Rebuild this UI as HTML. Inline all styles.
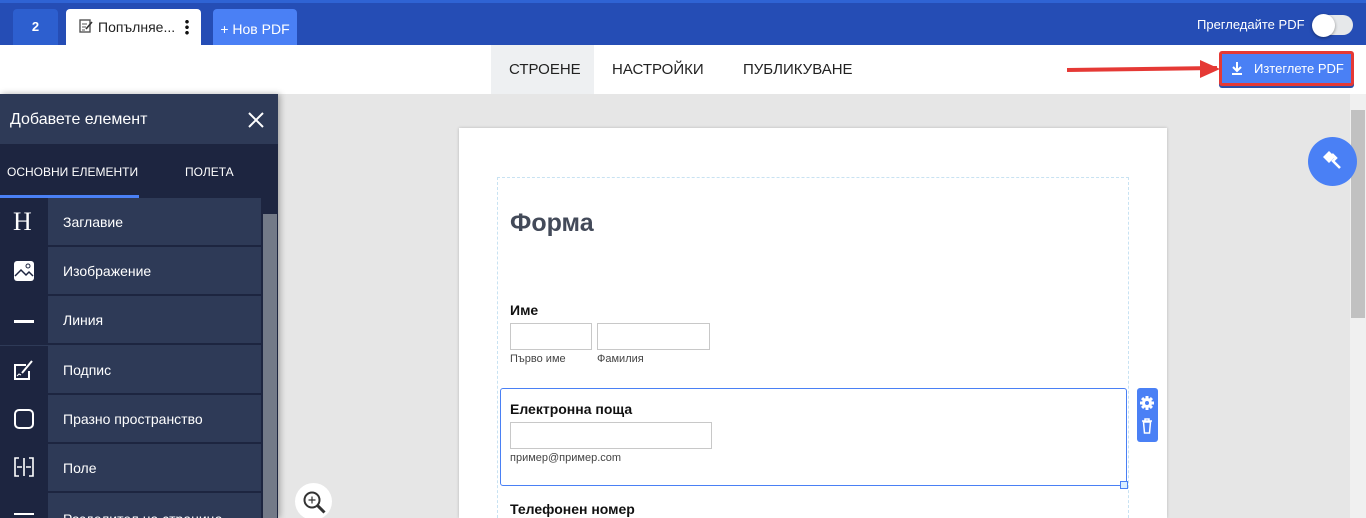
<!DOCTYPE html>
<html style="width:1366px;height:518px;overflow:hidden"><head><meta charset="utf-8"><style>
*{margin:0;padding:0;box-sizing:border-box}
body{width:1366px;height:518px;overflow:hidden;background:#e6e6e6;font-family:"Liberation Sans",sans-serif;position:relative}
.abs{position:absolute}
.top{left:0;top:0;width:1366px;height:45px;background:#254db5;border-top:3px solid #2f63d4}
.bar{left:0;top:45px;width:1366px;height:49px;background:#fff}
.side{left:0;top:94px;width:278px;height:424px;background:#2e3a57;box-shadow:2px 0 6px rgba(0,0,0,.3);overflow:hidden}
.row{position:absolute;left:0;width:261px;height:49px;border-bottom:2px solid #1d2540;color:#fff;font-size:14px}
.row .ic{position:absolute;left:0;top:0;width:48px;height:100%;background:#1d2540}
.row span{position:absolute;left:63px;top:16px}
.lbl{font-weight:bold;font-size:14px;color:#111}
.inp{position:absolute;border:1px solid #c8c8c8;background:#fff}
.sm{font-size:11px;color:#444;position:absolute}
</style></head><body>
<div class="abs top"></div>
<div class="abs" style="left:13px;top:9px;width:45px;height:36px;background:#2d5fcf;border-radius:4px 4px 0 0;color:#fff;font-size:13px;font-weight:bold;text-align:center;line-height:36px">2</div>
<div class="abs" style="left:66px;top:9px;width:135px;height:36px;background:#fff;border-radius:4px 4px 0 0;font-size:14px;color:#222;line-height:36px;padding-left:32px">Попълняе...</div>
<svg class="abs" style="left:79px;top:19px" width="14" height="15" viewBox="0 0 14 15"><rect x="1" y="1" width="10" height="12" fill="none" stroke="#555" stroke-width="1.4"/><path d="M3 5h5M3 8h4M3 11h3" stroke="#555"/><path d="M7 10l6-7" stroke="#333" stroke-width="1.6"/></svg>
<div class="abs" style="left:185px;top:19px;width:4px;height:16px;background:radial-gradient(circle,#111 1.6px,transparent 2px) 0 0/4px 5.5px"></div>
<div class="abs" style="left:213px;top:9px;width:84px;height:36px;background:#4a80f5;border-radius:4px 4px 0 0;color:#fff;font-size:14px;line-height:40px;text-align:center">+ Нов PDF</div>
<div class="abs" style="left:1197px;top:17px;color:#fff;font-size:13px">Прегледайте PDF</div>
<div class="abs" style="left:1313px;top:15px;width:40px;height:20px;border-radius:10px;background:#e6e8ea"></div>
<div class="abs" style="left:1312px;top:14px;width:23px;height:23px;border-radius:50%;background:#fff;box-shadow:0 1px 3px rgba(0,0,0,.4)"></div>
<div class="abs bar"></div>
<div class="abs" style="left:491px;top:45px;width:103px;height:49px;background:#eef0f2"></div>
<div class="abs" style="left:509px;top:61px;font-size:15px;color:#222">СТРОЕНЕ</div>
<div class="abs" style="left:612px;top:61px;font-size:15px;color:#222">НАСТРОЙКИ</div>
<div class="abs" style="left:743px;top:61px;font-size:15px;color:#222">ПУБЛИКУВАНЕ</div>
<div class="abs" style="left:1067px;top:67px;width:150px;height:4px;background:#e53935;transform:rotate(-0.8deg)"></div>
<div class="abs" style="left:1200px;top:60px;width:0;height:0;border-left:20px solid #e53935;border-top:9px solid transparent;border-bottom:9px solid transparent"></div>
<div class="abs" style="left:1219px;top:51px;width:135px;height:35px;border:3px solid #e53935;border-radius:3px;background:#4a80f5;color:#fff;font-size:13px;line-height:29px;padding-left:32px;box-shadow:0 2px 0 #2a4fa8">Изтеглете PDF</div>
<svg class="abs" style="left:1231px;top:61px" width="12" height="14"><path d="M6 1v8M2 6l4 4 4-4M1 13h10" stroke="#fff" stroke-width="2" fill="none"/></svg>
<div class="abs" style="left:1350px;top:94px;width:16px;height:424px;background:#f0f0f0"></div>
<div class="abs" style="left:1351px;top:110px;width:14px;height:208px;background:#c1c1c1"></div>
<div class="abs" style="left:459px;top:128px;width:708px;height:390px;background:#fff;box-shadow:0 0 3px rgba(0,0,0,.2)"></div>
<div class="abs" style="left:497px;top:177px;width:632px;height:341px;border:1px dashed #c8e2f2;border-bottom:none"></div>
<div class="abs" style="left:510px;top:209px;font-size:25px;font-weight:bold;color:#434a59">Форма</div>
<div class="abs lbl" style="left:510px;top:302px">Име</div>
<div class="inp" style="left:510px;top:323px;width:82px;height:27px"></div>
<div class="inp" style="left:597px;top:323px;width:113px;height:27px"></div>
<div class="sm" style="left:510px;top:353px">Първо име</div>
<div class="sm" style="left:597px;top:353px">Фамилия</div>
<div class="abs" style="left:500px;top:388px;width:627px;height:98px;border:1px solid #4a80f5;border-radius:3px"></div>
<div class="abs" style="left:1120px;top:481px;width:8px;height:8px;border:1px solid #4a80f5;background:#dbeeff"></div>
<div class="abs lbl" style="left:510px;top:401px">Електронна поща</div>
<div class="inp" style="left:510px;top:422px;width:202px;height:27px"></div>
<div class="sm" style="left:510px;top:452px">пример@пример.com</div>
<div class="abs lbl" style="left:510px;top:501px">Телефонен номер</div>
<div class="abs" style="left:1137px;top:388px;width:21px;height:54px;background:#4a80f5;border-radius:3px"></div>
<svg class="abs" style="left:1139px;top:395px" width="16" height="16" viewBox="0 0 16 16"><g fill="#fff"><circle cx="8" cy="8" r="5"/><rect x="6.5" y="1" width="3" height="14"/><rect x="1" y="6.5" width="14" height="3"/><rect x="6.5" y="1" width="3" height="14" transform="rotate(45 8 8)"/><rect x="6.5" y="1" width="3" height="14" transform="rotate(-45 8 8)"/></g><circle cx="8" cy="8" r="2" fill="#4a80f5"/></svg>
<svg class="abs" style="left:1141px;top:418px" width="12" height="16"><path d="M1 3h10M4 3V1h4v2M2.5 4l1 11h5l1-11z" fill="none" stroke="#fff" stroke-width="1.5"/></svg>
<div class="abs" style="left:1308px;top:137px;width:49px;height:49px;border-radius:50%;background:#4a80f5"></div>
<svg class="abs" style="left:1320px;top:149px" width="25" height="25" viewBox="0 0 25 25"><path d="M3 8l6-6 6 6-6 6z" fill="#fff"/><path d="M12 5l4 4-3 3 7 7" stroke="#fff" stroke-width="2.5" fill="none"/></svg>
<div class="abs" style="left:295px;top:483px;width:37px;height:37px;border-radius:50%;background:#fff"></div>
<svg class="abs" style="left:302px;top:490px" width="26" height="26"><circle cx="10" cy="10" r="7.5" fill="none" stroke="#333" stroke-width="2"/><path d="M15.5 15.5l7 7" stroke="#333" stroke-width="3"/><path d="M10 6.5v7M6.5 10h7" stroke="#333" stroke-width="1.2"/></svg>
<div class="abs side">
<div style="height:50px;color:#fff;font-size:16px;line-height:52px;padding-left:10px">Добавете елемент</div>
<svg class="abs" style="left:248px;top:18px" width="16" height="16"><path d="M1 1l14 14M15 1L1 15" stroke="#fff" stroke-width="2"/></svg>
<div style="height:54px;background:#1d2540;position:relative;color:#fff;font-size:12px">
<span class="abs" style="left:7px;top:21px">ОСНОВНИ ЕЛЕМЕНТИ</span>
<span class="abs" style="left:185px;top:21px">ПОЛЕТА</span>
<div class="abs" style="left:0;bottom:0;width:139px;height:3px;background:#4a80f5"></div>
</div>
<div class="row" style="top:104px"><div class="ic"><span style="left:13px;top:9px;font-family:'Liberation Serif',serif;font-size:26px">H</span></div><span>Заглавие</span></div>
<div class="row" style="top:153px"><div class="ic"><svg class="abs" style="left:14px;top:14px" width="20" height="20"><rect width="20" height="20" rx="3" fill="#fff"/><path d="M1 15l6-6 5 5 3-3 4 4" stroke="#1d2540" stroke-width="1.5" fill="none"/><circle cx="14" cy="5" r="2" fill="none" stroke="#1d2540"/></svg></div><span>Изображение</span></div>
<div class="row" style="top:202px"><div class="ic"><div class="abs" style="left:14px;top:24px;width:20px;height:3px;background:#fff"></div></div><span>Линия</span></div>
<div class="row" style="top:252px"><div class="ic"><svg class="abs" style="left:13px;top:13px" width="22" height="22"><path d="M13 6H2v14h14v-8" stroke="#fff" stroke-width="2" fill="none"/><path d="M9 14l10-12" stroke="#fff" stroke-width="2"/><path d="M4 17l2-2 2 1" stroke="#fff" fill="none"/></svg></div><span>Подпис</span></div>
<div class="row" style="top:301px"><div class="ic"><div class="abs" style="left:14px;top:14px;width:20px;height:20px;border:2px solid #fff;border-radius:5px"></div></div><span>Празно пространство</span></div>
<div class="row" style="top:350px"><div class="ic"><svg class="abs" style="left:14px;top:13px" width="20" height="20"><path d="M5 1H1v18h4M15 1h4v18h-4M10 1v18M3 10h5M12 10h5" stroke="#fff" stroke-width="1.6" fill="none"/></svg></div><span>Поле</span></div>
<div class="row" style="top:399px"><div class="ic"><div class="abs" style="left:14px;top:20px;width:20px;height:2px;background:#fff"></div></div><span style="top:18px">Разделител на страница</span></div>
<div class="abs" style="left:261px;top:104px;width:17px;height:320px;background:#1d2540"></div>
<div class="abs" style="left:263px;top:120px;width:14px;height:304px;background:#737a88"></div>
</div>
</body></html>
